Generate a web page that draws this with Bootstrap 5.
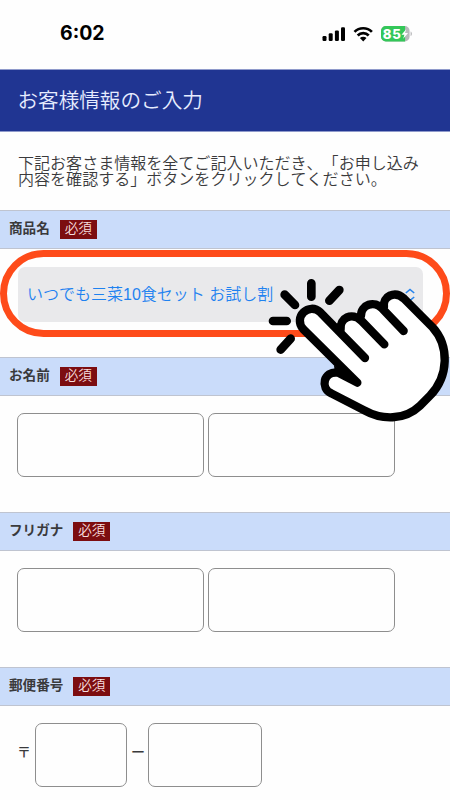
<!DOCTYPE html>
<html lang="ja">
<head>
    <meta charset="UTF-8">
    <meta name="viewport" content="width=device-width, initial-scale=1.0">
    <title>お客様情報のご入力</title>
    <link rel="stylesheet" href="https://cdn.jsdelivr.net/npm/bootstrap@5.3.0/dist/css/bootstrap.min.css">
    <style>
        body {
            height: 800px;
            background: #fefefe;
            color: #3a3a3c;
            font-family: "Liberation Sans", "Noto Sans CJK JP", sans-serif;
        }
        .status-bar {
            height: 69px;
            padding: 0 38px 2px 60px;
            color: #000;
            font-family: Inter, sans-serif;
        }
        .clock {
            font-size: 19.5px;
            font-weight: 700;
        }
        .page-title {
            height: 63px;
            padding: 0 0 2px 17.5px;
            background: #203592;
            border-top: 1px solid #8f9acb;
            border-bottom: 1px solid #8f9acb;
            color: #e6ecff;
            font-size: 20.6px;
            font-weight: 350;
            font-family: "Noto Sans CJK JP", sans-serif;
        }
        .intro {
            height: 78px;
            padding: 22px 0 0 18px;
            font-size: 16.05px;
            font-weight: 350;
            font-kerning: none;
            text-spacing-trim: space-all;
            line-height: 16px;
            font-family: "Noto Sans CJK JP", sans-serif;
        }
        .field-head {
            height: 39px;
            padding: 0 0 1px 9px;
            background: #cadcfa;
            border-top: 1px solid #bfc4d0;
            border-bottom: 1px solid #bfc4d0;
            font-size: 13.6px;
            font-weight: 700;
        }
        .required {
            width: 37px;
            height: 19px;
            margin-left: 10px;
            background: #7c0d10;
            color: #f6dede;
            font-size: 13.6px;
            font-weight: 350;
            line-height: 18px;
        }
        .product-body {
            height: 108px;
            padding: 18px 27px 0 18px;
        }
        .name-body {
            height: 116px;
            padding: 17px 0 0 17px;
            gap: 4px;
        }
        .product-select {
            height: 55px;
            padding: 0 8px 0 9px;
            background: #e9e9eb;
            border-radius: 7px;
            color: #1f82f0;
            font-size: 16px;
            font-weight: 350;
        }
        .text-box {
            width: 187px;
            height: 64px;
            padding: 0 8px;
            background: #fefefe;
            border: 1.5px solid #8e8e8e;
            border-radius: 7px;
        }
        .zip-body {
            padding: 17px 0 0 17px;
            font-size: 14px;
            font-weight: 500;
        }
        .zip-mark {
            margin-top: -5px;
        }
        .zip-first {
            width: 92px;
            margin: 0 4px;
        }
        .zip-last {
            width: 114px;
            margin-left: 3px;
        }
        /* highlight ring and tapping hand drawn over the form */
        .highlight-ring {
            left: 0;
            top: 1px;
            width: 450px;
            height: 87px;
            border: 7px solid #fe4b1a;
            border-radius: 44px;
        }
        .tap-hand {
            left: 250px;
            top: 1px;
            z-index: 2;
        }
    </style>
</head>
<body class="overflow-hidden">
    <header class="status-bar d-flex align-items-center justify-content-between">
        <span class="clock">6:02</span>
        <svg width="90" height="20" viewBox="0 0 90 20">
            <g fill="#000">
                <rect x="0.500" y="12" width="4" height="5" rx="1.2"/>
                <rect x="6.700" y="9.300" width="4" height="7.700" rx="1.2"/>
                <rect x="12.900" y="6.400" width="4" height="10.600" rx="1.2"/>
                <rect x="19" y="3.200" width="4" height="13.800" rx="1.2"/>
            </g>
            <g fill="none" stroke="#000" stroke-width="2.7">
                <path d="M32.500 7.900a12.200 12.200 0 0 1 17.400 0"/>
                <path d="M35.700 11.500a7.700 7.700 0 0 1 11 0"/>
            </g>
            <path d="M37.900 14a4.700 4.700 0 0 1 6.600 0l-3.300 3.400z"/>
            <rect x="59" y="2" width="28.600" height="15.500" rx="4.800" fill="#b9b9bc"/>
            <path d="M63.800 2h19.300v15.500h-19.300a4.800 4.800 0 0 1-4.800-4.800v-5.900a4.800 4.800 0 0 1 4.800-4.800z" fill="#34c759"/>
            <path d="M88.600 7.500v4.600c1.800-.7 1.800-3.900 0-4.600z" fill="#b9b9bc"/>
            <text x="60.800" y="14.500" font-size="13.200" font-weight="800" fill="#fff" textLength="18">85</text>
            <path d="M84.200 5.200l-4.700 5.600h2.900l-1.200 4 4.900-5.700h-3z" fill="#fff"/>
        </svg>
    </header>

    <h1 class="page-title d-flex align-items-center m-0">お客様情報のご入力</h1>

    <p class="intro m-0">下記お客さま情報を全てご記入いただき、「お申し込み<br>内容を確認する」ボタンをクリックしてください。</p>

    <form>
        <!-- 商品名 -->
        <div class="field-head d-flex align-items-center">商品名<span class="required text-center">必須</span></div>
        <div class="product-body position-relative">
            <div class="product-select d-flex align-items-center justify-content-between">
                <span>いつでも三菜10食セット お試し割</span>
                <svg width="10" height="14" viewBox="0 0 10 14" fill="none" stroke="#2583ec" stroke-width="1.6">
                    <path d="M.8 5L5 1.5 9.200 5M.8 9L5 12.500 9.200 9"/>
                </svg>
            </div>
            <div class="highlight-ring position-absolute"></div>
            <svg class="tap-hand position-absolute" width="200" height="180" viewBox="0 0 600 540" fill="none" stroke="#000" stroke-width="25" stroke-linecap="round" stroke-linejoin="round">
                <path fill="#fff" stroke="none" d="M160 238L322 398L264 368C220 362 210 415 244 430L343 481C395 510 463 512 510 467L540 437C597 378 598 287 548 232L462 146C430 118 390 145 400 180C375 145 330 165 334 207C300 180 270 205 272 246L211 187C177 155 128 202 160 238Z"/>
                <path d="M345 324L211 187C177 155 128 202 160 238L322 398L264 368C220 362 210 415 244 430L343 481C395 510 463 512 510 467L540 437C597 378 598 287 548 232L462 146C434 120 397 140 402 170"/>
                <path d="M272 238C268 205 306 184 335 213L403 283M333 198C332 165 373 148 399 178L461 243"/>
                <path fill="#000" stroke="none" d="M252 346L325 405L255 372Z"/>
                <path stroke-width="26" d="M184 100V140M104 134L135 165M268 120L238 152M69 213H110M122 266L92 299"/>
            </svg>
        </div>

        <!-- お名前 -->
        <div class="field-head d-flex align-items-center">お名前<span class="required text-center">必須</span></div>
        <div class="name-body d-flex align-items-start">
            <input type="text" class="text-box">
            <input type="text" class="text-box">
        </div>

        <!-- フリガナ -->
        <div class="field-head d-flex align-items-center">フリガナ<span class="required text-center">必須</span></div>
        <div class="name-body d-flex align-items-start">
            <input type="text" class="text-box">
            <input type="text" class="text-box">
        </div>

        <!-- 郵便番号 -->
        <div class="field-head d-flex align-items-center">郵便番号<span class="required text-center">必須</span></div>
        <div class="zip-body d-flex align-items-center">
            <span class="zip-mark">〒</span><input type="text" class="text-box zip-first"><span class="zip-mark">ー</span><input type="text" class="text-box zip-last">
        </div>
    </form>

    <script src="https://cdn.jsdelivr.net/npm/bootstrap@5.3.0/dist/js/bootstrap.bundle.min.js"></script>
</body>
</html>
